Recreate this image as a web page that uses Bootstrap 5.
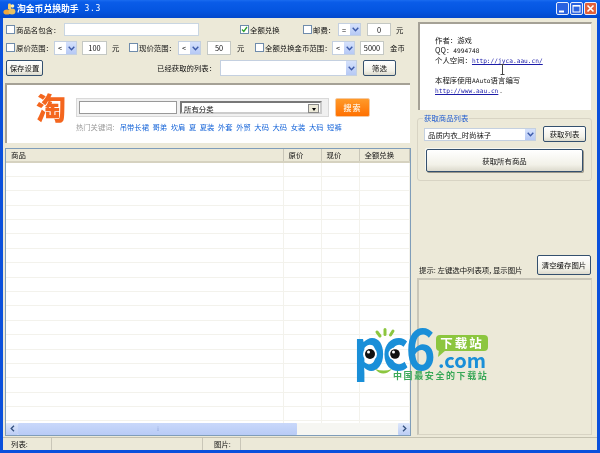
<!DOCTYPE html>
<html lang="zh">
<head>
<meta charset="utf-8">
<title>淘金币兑换助手</title>
<link href="https://cdn.jsdelivr.net/npm/bootstrap@5.3.0/dist/css/bootstrap.min.css" rel="stylesheet">
<style>
html,body{margin:0;width:600px;height:453px;overflow:hidden;background:#ece9d8}
body,.win,.win *{font-family:"Noto Sans CJK SC","Liberation Sans",sans-serif}
.win{position:relative;width:600px;height:453px;background:#ece9d8;border:solid #0a50dc;border-width:0 3px 3px;font-size:7.4px;line-height:1;color:#111;filter:blur(.35px)}
.titlebar{height:18px;margin:0 -3px;padding:0 3px;background:linear-gradient(#1a6cf0 0,#0a5ce8 12%,#0455e0 60%,#0248cc 100%);color:#fff;font-weight:700;font-size:8.8px}
.ttl-txt{margin-left:1px}
.ttl-ver{margin-left:6px;font-family:"DejaVu Sans Mono",monospace!important;font-size:8px;font-weight:400;letter-spacing:.6px}
.wbtn{width:13px;height:13px;border:1px solid #e8eefc;border-radius:2px;background:#2a62e0;margin-left:1px;padding:0}
.wbtn.cls{background:#e2603a}
.main{height:419px}
.leftc{width:408px;padding:5px 0 0 2px}
.rightc{width:175px;margin-left:6px;padding-top:4px}
.frow{padding-left:1px}
.r1{height:13px;margin-bottom:5px}
.r2{height:14px;margin-bottom:5px}
.r3{height:16px;margin-bottom:7px}
.form-check-input.xpc{width:9px;height:9px;margin:0;flex:none;border:1px solid #6f8cac;border-radius:0;background-color:#fff;background-size:100%}
.tick{width:9px;height:9px;display:block;flex:none;border:1px solid #6f8cac;background:#fff}
.lb{padding-left:1px;white-space:nowrap;flex:none}
.form-control.xpi,.form-select.xps{height:100%;min-height:0;font-size:7.4px;line-height:1.3;border:1px solid #8fa8c4;border-radius:0;padding:0 2px;color:#111;box-shadow:none;flex:none}
.form-control.xpi.pale{border-color:#c9d6e2}
.form-control.xpi.num{text-align:center;font-size:7.4px;border-color:#c4c8c4}
.form-select.xps{padding:0 0 0 3px;border-color:#c4d0e0;background-color:#fff;background-image:linear-gradient(#d5e1fb,#b6c9f5);background-size:10px 100%;background-position:right;background-repeat:no-repeat}
.selbox{position:relative;flex:none;height:100%}
.selbox .form-select{width:100%}
.chev{position:absolute;right:2px;top:50%;margin-top:-2px;width:7px;height:5px}
.btn.xpb{height:100%;font-size:7.4px;line-height:1;padding:0;color:#111;background:linear-gradient(#fff,#f2f1e8 70%,#dcdacd);border:1px solid #34506e;border-radius:2px;flex:none}
.w135{width:135px}.w23{width:23px}.w24{width:24px}.w25{width:25px}.w33{width:33px}.w37{width:37px}.w137{width:137px}
.l49{width:49px}.l54{width:54px}.l26{width:26px}.l39{width:39px}.l40{width:40px}.l68{width:68px}.l18{width:18px}.l19{width:19px}
.g41{margin-left:41px}.g6{margin-left:6px}.g5{margin-left:5px}.g4{margin-left:4px}.g113{margin-left:113px}
.lst-l{width:64px;text-align:right;padding-right:7px;flex:none;white-space:nowrap}
.webp{height:60px;margin-bottom:5px;background:#fff;border-top:2px solid #a5a196;border-left:2px solid #a5a196;width:405px;position:relative}
.tb-logo{width:32px;color:#f4661e;font-size:30px;font-weight:900;line-height:1;margin:6px 0 0 29px;flex:none}
.tb-mid{margin-left:8px;padding-top:13px}
.tb-form{width:253px;height:19px;background:#f0f0f0;border:1px solid #d9d9d9;padding:2px}
.tb-input{width:98px;height:100%;border:1px solid #999;background:#fff}
.tb-cat{width:142px;height:100%;margin-left:3px;border:2px inset #ccc;background:#fff;font-size:7.4px;padding:2px 0 0 2px;position:relative}
.tb-drop{position:absolute;right:1px;top:1px;width:11px;height:9px;background:#ece9d8;border:1px solid #888;font-size:0}
.tb-drop::after{content:"";display:block;margin:3px auto 0;width:0;height:0;border:2.5px solid transparent;border-top:3px solid #000;border-bottom:0}
.tb-search{width:35px;height:19px;margin-left:6px;background:linear-gradient(#ff9a2a,#ff7000);border:1px solid #f5c9a0;border-radius:2px;color:#ffe9d0;font-size:8px;font-weight:700;line-height:17px;text-align:center;flex:none;letter-spacing:1px}
.tb-hot{margin-top:7px;font-size:7.3px;color:#999;white-space:nowrap}
.tb-hot a{color:#1463d8;text-decoration:none;margin-left:3.6px}
.lstv{height:288px;width:406px;border:1px solid #7f9db9;background:#fff;overflow:hidden}
.tbl-wrap{flex:1 1 auto;overflow:hidden}
.table.xpt{table-layout:fixed;width:404px;margin:0;font-size:7.4px;--bs-table-bg:transparent;border-collapse:collapse}
.table.xpt th{height:13px;padding:0 0 0 5px;background:#ece9d8;border:0;border-right:1px solid #c9c6b8;border-bottom:2px solid #d6d2c0;font-weight:400;color:#111;vertical-align:middle}
.table.xpt td{height:14.4px;padding:0;border:0;border-right:1px solid #f3f2ec;border-bottom:1px solid #f3f2ec}
.c1{width:277px}.c2,.c3{width:38px}
.hsb{height:12px;flex:none;background:#f6f6f2}
.hsb-b{width:12px;background:linear-gradient(#dde7fb,#bccdf5);flex:none;border-radius:1px}
.hsb-t{width:279px;background:linear-gradient(#c9d8fa,#b8cbf6);border-radius:1px;text-align:center;color:#92a8dc;font-size:6px;line-height:12px}
.infop{height:88px;background:#fff;border-top:2px solid #a5a196;border-left:2px solid #a5a196;border-right:1px solid #e8e6da;margin:0 0 8px 1px;padding:11px 0 0 15px;font-size:7.4px;line-height:10px;position:relative;width:174px}
.infol{height:10px;white-space:nowrap}
.infop a{color:#1c1ca8;font-family:"DejaVu Sans Mono",monospace!important;font-size:6.2px;text-decoration:underline}
.infop .sm{font-size:6.2px;font-family:"DejaVu Sans Mono",monospace!important}
.ibeam{position:absolute;left:80px;top:40px;width:5px;height:11px}
.grpb{height:63px;border:1px solid #d8d4c4;border-radius:3px;position:relative;padding:9px 6px 0 6px}
.grp-t{position:absolute;left:5px;top:-5px;background:#ece9d8;color:#1f5bd0;font-size:7.4px;padding:0 1px}
.gr1{height:15px}
.gsel{width:112px;height:13px}
.gbtn{width:43px;margin-left:7px;height:16px!important;margin-top:-2px}
.bigb.btn.xpb{display:block;width:157px;height:23px;margin:6px 0 0 2px;box-shadow:1px 1px 0 #9a978a,-1px -1px 0 #f8f8f2}
.hintr{height:20px;margin-top:74px;padding-left:2px}
.hint-t{white-space:nowrap;padding-bottom:2px}
.clrb{width:54px;margin-left:auto;margin-right:1px;height:20px!important}
.lowp{height:157px;margin-top:3px;border:1px solid #d8d4c4;border-top:2px solid #c9c6b8;border-left:2px solid #c9c6b8}
.stat{height:13px;margin-top:1px;border-top:1px solid #c4c1b0;background:#ece9d8}
.sc{height:100%;border-right:1px solid #c9c6b8;display:flex;align-items:center;flex:none}
.s1{width:49px;padding-left:8px}.s2{width:151px}.s3{width:38px;padding-left:11px}
.pc6{position:absolute;left:349px;top:311px;width:140px;height:71px;pointer-events:none}
</style>
</head>
<body>
<div class="win d-flex flex-column">
  <div class="titlebar d-flex align-items-center">
    <svg width="13" height="13" viewBox="0 0 13 13"><ellipse cx="4" cy="10" rx="3.6" ry="2.6" fill="#f2a83a"/><ellipse cx="9" cy="9.5" rx="3.4" ry="3" fill="#e8c060"/><rect x="5" y="1.5" width="3" height="6" rx="1.2" fill="#f6d070"/><circle cx="9.5" cy="4" r="1.8" fill="#fff2b0"/></svg>
    <span class="ttl-txt">淘金币兑换助手</span><span class="ttl-ver">3.3</span>
    <div class="ms-auto d-flex">
      <button class="wbtn d-flex align-items-end justify-content-start" aria-label="最小化"><svg width="11" height="11" viewBox="0 0 11 11"><rect x="2" y="7.5" width="5" height="2" fill="#fff"/></svg></button>
      <button class="wbtn" aria-label="最大化"><svg class="d-block" width="11" height="11" viewBox="0 0 11 11"><rect x="2" y="2.5" width="7" height="6.5" fill="none" stroke="#fff"/><rect x="2" y="2" width="7" height="1.6" fill="#fff"/></svg></button>
      <button class="wbtn cls" aria-label="关闭"><svg class="d-block" width="11" height="11" viewBox="0 0 11 11"><path d="M2.5 2.5l6 6m0-6l-6 6" stroke="#fff" stroke-width="1.6"/></svg></button>
    </div>
  </div>

  <div class="main d-flex">
    <div class="leftc">
      <div class="frow r1 d-flex align-items-center">
        <input class="form-check-input xpc" type="checkbox"><span class="lb l49">商品名包含：</span>
        <input class="form-control xpi pale w135" type="text">
        <span class="tick g41"><svg class="d-block" width="7" height="7" viewBox="0 0 7 7"><path d="M1 3.5l1.800 2L6 1" fill="none" stroke="#2ca02c" stroke-width="1.300"/></svg></span><span class="lb l54">全额兑换</span>
        <input class="form-check-input xpc" type="checkbox"><span class="lb l26">邮费：</span>
        <div class="selbox w23"><select class="form-select xps"><option>=</option></select><svg class="chev" viewBox="0 0 7 5"><path d="M.7.7l2.800 3 2.800-3" fill="none" stroke="#3c5aa8" stroke-width="1.400"/></svg></div>
        <input class="form-control xpi num w24 g6" type="text" value="0"><span class="lb g4">元</span>
      </div>
      <div class="frow r2 d-flex align-items-center">
        <input class="form-check-input xpc" type="checkbox"><span class="lb l39">原价范围：</span>
        <div class="selbox w23"><select class="form-select xps"><option>&lt;</option></select><svg class="chev" viewBox="0 0 7 5"><path d="M.7.7l2.800 3 2.800-3" fill="none" stroke="#3c5aa8" stroke-width="1.400"/></svg></div>
        <input class="form-control xpi num w25 g5" type="text" value="100"><span class="lb g4 l18">元</span>
        <input class="form-check-input xpc" type="checkbox"><span class="lb l40">现价范围：</span>
        <div class="selbox w23"><select class="form-select xps"><option>&lt;</option></select><svg class="chev" viewBox="0 0 7 5"><path d="M.7.7l2.800 3 2.800-3" fill="none" stroke="#3c5aa8" stroke-width="1.400"/></svg></div>
        <input class="form-control xpi num w24 g6" type="text" value="50"><span class="lb g5 l19">元</span>
        <input class="form-check-input xpc" type="checkbox"><span class="lb l68">全额兑换金币范围：</span>
        <div class="selbox w23"><select class="form-select xps"><option>&lt;</option></select><svg class="chev" viewBox="0 0 7 5"><path d="M.7.7l2.800 3 2.800-3" fill="none" stroke="#3c5aa8" stroke-width="1.400"/></svg></div>
        <input class="form-control xpi num w24 g5" type="text" value="5000"><span class="lb g5">金币</span>
      </div>
      <div class="frow r3 d-flex align-items-center">
        <button class="btn xpb w37" type="button">保存设置</button>
        <span class="lb g113 lst-l">已经获取的列表：</span>
        <div class="selbox w137"><select class="form-select xps"><option></option></select><svg class="chev" viewBox="0 0 7 5"><path d="M.7.7l2.800 3 2.800-3" fill="none" stroke="#3c5aa8" stroke-width="1.400"/></svg></div>
        <button class="btn xpb w33 g6" type="button">筛选</button>
      </div>

      <div class="webp d-flex">
        <div class="tb-logo">淘</div>
        <div class="tb-mid">
          <div class="d-flex">
            <div class="tb-form d-flex">
              <div class="tb-input"></div>
              <div class="tb-cat">所有分类<span class="tb-drop"></span></div>
            </div>
            <div class="tb-search">搜索</div>
          </div>
          <div class="tb-hot">热门关键词: <a href="#">吊带长裙</a><a href="#">哥弟</a><a href="#">坎肩</a><a href="#">夏</a><a href="#">夏装</a><a href="#">外套</a><a href="#">外贸</a><a href="#">大码</a><a href="#">大码</a><a href="#">女装</a><a href="#">大码</a><a href="#">短裤</a></div>
        </div>
      </div>

      <div class="lstv d-flex flex-column">
        <div class="tbl-wrap">
          <table class="table xpt">
            <thead><tr><th class="c1">商品</th><th class="c2">原价</th><th class="c3">现价</th><th>全额兑换</th></tr></thead>
            <tbody>
              <tr><td></td><td></td><td></td><td></td></tr><tr><td></td><td></td><td></td><td></td></tr><tr><td></td><td></td><td></td><td></td></tr><tr><td></td><td></td><td></td><td></td></tr><tr><td></td><td></td><td></td><td></td></tr><tr><td></td><td></td><td></td><td></td></tr><tr><td></td><td></td><td></td><td></td></tr><tr><td></td><td></td><td></td><td></td></tr><tr><td></td><td></td><td></td><td></td></tr><tr><td></td><td></td><td></td><td></td></tr><tr><td></td><td></td><td></td><td></td></tr><tr><td></td><td></td><td></td><td></td></tr><tr><td></td><td></td><td></td><td></td></tr><tr><td></td><td></td><td></td><td></td></tr><tr><td></td><td></td><td></td><td></td></tr><tr><td></td><td></td><td></td><td></td></tr><tr><td></td><td></td><td></td><td></td></tr><tr><td></td><td></td><td></td><td></td></tr><tr><td></td><td></td><td></td><td></td></tr>
            </tbody>
          </table>
        </div>
        <div class="hsb d-flex">
          <div class="hsb-b d-flex align-items-center justify-content-center"><svg width="5" height="7" viewBox="0 0 5 7"><path d="M4 .8L1.200 3.500 4 6.200" fill="none" stroke="#33507e" stroke-width="1.300"/></svg></div>
          <div class="hsb-t">⦙⦙</div>
          <div class="flex-grow-1"></div>
          <div class="hsb-b d-flex align-items-center justify-content-center"><svg width="5" height="7" viewBox="0 0 5 7"><path d="M1 .8l2.800 2.700L1 6.200" fill="none" stroke="#33507e" stroke-width="1.300"/></svg></div>
        </div>
      </div>
    </div>

    <div class="rightc">
      <div class="infop">
        <div class="infol">作者：游戏</div>
        <div class="infol">QQ：<span class="sm">4994748</span></div>
        <div class="infol">个人空间：<a href="#">http://jyca.aau.cn/</a></div>
        <div class="infol"></div>
        <div class="infol">本程序使用<span class="sm">AAuto</span>语言编写</div>
        <div class="infol"><a href="#">http://www.aau.cn</a> .</div>
        <svg class="ibeam" viewBox="0 0 5 11"><path d="M.5.5h4M2.500.5v10M.5 10.500h4" stroke="#444" fill="none"/></svg>
      </div>
      <div class="grpb">
        <span class="grp-t">获取商品列表</span>
        <div class="gr1 d-flex align-items-start">
          <div class="selbox gsel"><select class="form-select xps"><option>品质内衣_时尚袜子</option></select><svg class="chev" viewBox="0 0 7 5"><path d="M.7.7l2.800 3 2.800-3" fill="none" stroke="#3c5aa8" stroke-width="1.400"/></svg></div>
          <button class="btn xpb gbtn" type="button">获取列表</button>
        </div>
        <button class="btn xpb bigb" type="button">获取所有商品</button>
      </div>
      <div class="hintr d-flex align-items-end">
        <span class="hint-t">提示: 左键选中列表项, 显示图片</span>
        <button class="btn xpb clrb" type="button">清空缓存图片</button>
      </div>
      <div class="lowp"></div>
    </div>
  </div>

  <div class="stat d-flex">
    <div class="sc s1">列表:</div><div class="sc s2"></div><div class="sc s3">图片:</div>
  </div>

  <svg class="pc6" viewBox="0 -15 140 71" aria-label="pc6下载站">
    <g stroke="#8cc63f" stroke-width="3" stroke-linecap="round"><path d="M25 6l3 4M33 3.500v5M41 5l-2.500 4"/></g>
    <g transform="translate(1 44) scale(.9 1)"><text x="0" y="0" font-size="56" font-weight="700" fill="#1a8fd8" letter-spacing="-3.500" font-family="Liberation Sans">pc6</text></g>
    <circle cx="18" cy="28" r="7" fill="#fff"/><circle cx="18" cy="28" r="5" fill="#111"/><circle cx="16.500" cy="26" r="1.500" fill="#fff"/>
    <circle cx="43" cy="28" r="6.500" fill="#fff"/><circle cx="43" cy="28" r="4.800" fill="#111"/><circle cx="41.500" cy="26" r="1.500" fill="#fff"/>
    <path d="M23 43q8 9 17 0q-8 3-17 0z" fill="#8cc63f"/>
    <rect x="84" y="9" width="52" height="16" rx="4" fill="#8cc63f"/><path d="M87 24l-1 7 8-7z" fill="#8cc63f"/>
    <text x="110" y="21.500" text-anchor="middle" font-size="12.500" font-weight="700" fill="#fff" letter-spacing="2" font-family="Noto Sans CJK SC">下载站</text>
    <text x="86" y="42" font-size="20" font-weight="700" fill="#1a8fd8" font-family="Liberation Sans">.com</text>
    <text x="41" y="52.500" font-size="9" font-weight="700" fill="#3aa858" letter-spacing="1.600" font-family="Noto Sans CJK SC">中国最安全的下载站</text>
  </svg>
</div>
<script src="https://cdn.jsdelivr.net/npm/bootstrap@5.3.0/dist/js/bootstrap.bundle.min.js"></script>
</body>
</html>
